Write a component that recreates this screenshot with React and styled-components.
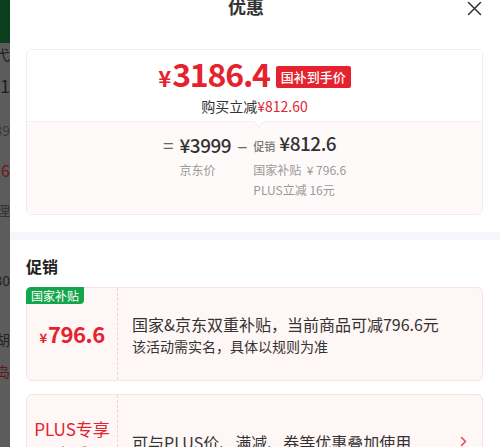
import React from 'react'
import styled, { createGlobalStyle } from 'styled-components'

const GlobalStyle = createGlobalStyle`
  html, body {
    margin: 0;
    padding: 0;
    height: 447px;
    overflow: hidden;
    background: #fff;
  }
  body {
    font-family: "Noto Sans CJK SC", "Noto Sans", sans-serif;
    color: #333;
  }
  * { box-sizing: border-box; }
`

const RED = '#e5232f'

const Page = styled.div`
  display: flex;
  height: 447px;
`

// the darkened page behind the sheet
const Backdrop = styled.div`
  width: 10px;
  flex: none;
  display: flex;
  flex-direction: column;
  background: #5c5c5c;
  overflow: hidden;
`

const BackdropTop = styled.div`
  height: 43px;
  flex: none;
  background: #0c3f1c;
`

const Peek = styled.div`
  display: flex;
  flex: none;
  justify-content: flex-end;
  white-space: nowrap;
  height: ${p => p.$h}px;
  align-items: center;
  font-size: ${p => p.$size || 14}px;
  color: ${p => p.$color || '#1e1e1e'};
`

const Sheet = styled.div`
  flex: 1;
  background: #fff;
  display: flex;
  flex-direction: column;
  overflow: hidden;

  & > * {
    flex-shrink: 0;
  }
`

const Header = styled.div`
  height: 49px;
  display: grid;
  grid-template-columns: 1fr auto 1fr;
  align-items: start;
  padding-right: 18px;
`

const Title = styled.h1`
  grid-column: 2;
  margin: -3px 0 0;
  font-size: 18px;
  line-height: 18px;
  font-weight: 700;
  color: #333;
`

const Close = styled.button`
  grid-column: 3;
  justify-self: end;
  margin-top: 1px;
  padding: 0;
  border: 0;
  background: none;
  width: 15px;
  height: 15px;
  display: flex;
`

const SummaryCard = styled.div`
  margin: 0 17px 0 16px;
  border: 1px solid #f6e9eb;
  border-radius: 6px;
  overflow: hidden;
`

const SummaryTop = styled.div`
  position: relative;
  height: 72px;
  padding-top: 7px;
  display: flex;
  flex-direction: column;
  align-items: center;
  gap: 3px;
  background: #fff;
  border-bottom: 1px solid #f8eeee;

  &::after {
    content: '';
    position: absolute;
    left: 228px;
    bottom: -5px;
    width: 7px;
    height: 7px;
    background: #fff;
    border-right: 1px solid #f8eeee;
    border-bottom: 1px solid #f8eeee;
    transform: rotate(45deg);
    z-index: 1;
  }
`

const PriceRow = styled.div`
  display: flex;
  align-items: center;
  height: 36px;
  gap: 6px;
`

const BigPrice = styled.span`
  color: ${RED};
  font-weight: 700;
  font-size: 32px;
  line-height: 36px;
  letter-spacing: -1.2px;
`

const Yen = styled.span`
  font-size: ${p => p.$size}px;
  margin-right: ${p => p.$gap || 0}px;
  letter-spacing: 0;
`

const RedTag = styled.span`
  background: ${RED};
  color: #fff;
  font-size: 13px;
  font-weight: 500;
  line-height: 22px;
  height: 22px;
  padding: 0 5px;
  border-radius: 2px;
  margin-top: 4px;
`

const SubLine = styled.div`
  font-size: 14px;
  line-height: 20px;
  color: #333;
`

const Red = styled.span`
  color: ${RED};
`

const SummaryBottom = styled.div`
  background: #fffafa;
  padding: 9px 0 14px;
  display: flex;
  justify-content: center;
`

const Formula = styled.div`
  display: grid;
  grid-template-columns: auto auto auto auto;
  column-gap: 6px;
  align-items: center;
`

const Op = styled.span`
  font-size: 19px;
  line-height: 24px;
  color: #666;
`

const Amount = styled.span`
  font-size: 19px;
  line-height: 24px;
  font-weight: 500;
  color: #333;
  letter-spacing: -0.5px;
`

const Small = styled.span`
  font-size: 11px;
  color: #777;
  margin-right: 4px;
  letter-spacing: 0;
`

const Note = styled.span`
  grid-column: ${p => p.$col};
  font-size: 12px;
  line-height: 20px;
  color: #999;
  white-space: pre;
  margin-top: ${p => p.$top || 0}px;
`

const Band = styled.div`
  height: 8px;
  margin-top: 17px;
  background: #f5f6f9;
`

const SectionTitle = styled.h2`
  margin: 15px 16px 10px;
  font-size: 16px;
  line-height: 22px;
  font-weight: 700;
  color: #222;
`

const PromoCard = styled.div`
  position: relative;
  display: flex;
  height: 94px;
  margin: ${p => p.$top || 0}px 17px 0 16px;
  border: 1px solid #f7e2e4;
  border-radius: 6px;
  background: #fff6f6;
`

const PromoLeft = styled.div`
  width: 91px;
  flex: none;
  border-right: 1px dashed #efd3d7;
  display: flex;
  flex-direction: column;
  align-items: center;
  justify-content: center;
  color: ${RED};
`

const GreenTag = styled.span`
  position: absolute;
  top: -1px;
  left: -1px;
  background: #15a64c;
  color: #fff;
  font-size: 12px;
  line-height: 17px;
  padding: 0 5px;
  border-radius: 5px 0 4px 0;
`

const PromoPrice = styled.span`
  font-size: 22px;
  font-weight: 700;
  line-height: 28px;
  margin-top: 3px;
  letter-spacing: -0.5px;
`

const PlusLabel = styled.span`
  font-size: 17px;
  line-height: 25px;
  text-align: center;
`

const PromoBody = styled.div`
  flex: 1;
  display: flex;
  align-items: center;
  padding: 0 15px 0 14px;
`

const PromoText = styled.div`
  flex: 1;
  display: flex;
  flex-direction: column;
  gap: 1px;
  margin-top: 2px;
`

const Line = styled.span`
  font-size: ${p => p.$size}px;
  line-height: 21px;
  color: #333;
`

const Chevron = () => (
  <svg width="7" height="11" viewBox="0 0 7 11" fill="none">
    <path d="M1.5 1.5 L5.5 5.5 L1.5 9.5" stroke="#e8475a" strokeWidth="1.6" strokeLinecap="round" strokeLinejoin="round" />
  </svg>
)

export default function App() {
  return (
    <>
      <GlobalStyle />
      <Page>
        <Backdrop>
          <BackdropTop />
          <Peek $h={22}>毛弋</Peek>
          <Peek $h={40} $size={18}>21</Peek>
          <Peek $h={50} $color="#3a3a3a">39</Peek>
          <Peek $h={30} $size={16} $color="#6e1515">6</Peek>
          <Peek $h={50} $color="#333">理</Peek>
          <Peek $h={90} $color="#222">30</Peek>
          <Peek $h={28} $color="#222">胡</Peek>
          <Peek $h={36} $color="#5a1a1a">岛</Peek>
        </Backdrop>
        <Sheet>
          <Header>
            <Title>优惠</Title>
            <Close aria-label="关闭">
              <svg width="15" height="15" viewBox="0 0 15 15">
                <path d="M1.5 1.5 L13.5 13.5 M13.5 1.5 L1.5 13.5" stroke="#333" strokeWidth="1.5" strokeLinecap="round" />
              </svg>
            </Close>
          </Header>

          <SummaryCard>
            <SummaryTop>
              <PriceRow>
                <BigPrice><Yen $size={22} $gap={1}>¥</Yen>3186.4</BigPrice>
                <RedTag>国补到手价</RedTag>
              </PriceRow>
              <SubLine>购买立减<Red>¥812.60</Red></SubLine>
            </SummaryTop>
            <SummaryBottom>
              <Formula>
                <Op>=</Op>
                <Amount>¥3999</Amount>
                <Op>–</Op>
                <Amount><Small>促销</Small>¥812.6</Amount>
                <Note $col={2} $top={2}>京东价</Note>
                <Note $col={4} $top={2}>国家补贴  ¥ 796.6</Note>
                <Note $col={4}>PLUS立减 16元</Note>
              </Formula>
            </SummaryBottom>
          </SummaryCard>

          <Band />
          <SectionTitle>促销</SectionTitle>

          <PromoCard>
            <GreenTag>国家补贴</GreenTag>
            <PromoLeft>
              <PromoPrice><Yen $size={13} $gap={1}>¥</Yen>796.6</PromoPrice>
            </PromoLeft>
            <PromoBody>
              <PromoText>
                <Line $size={16}>国家&amp;京东双重补贴，当前商品可减796.6元</Line>
                <Line $size={14}>该活动需实名，具体以规则为准</Line>
              </PromoText>
            </PromoBody>
          </PromoCard>

          <PromoCard $top={13}>
            <PromoLeft>
              <PlusLabel>PLUS专享<br />立减</PlusLabel>
            </PromoLeft>
            <PromoBody>
              <PromoText>
                <Line $size={16}>可与PLUS价、满减、券等优惠叠加使用</Line>
              </PromoText>
              <Chevron />
            </PromoBody>
          </PromoCard>
        </Sheet>
      </Page>
    </>
  )
}
